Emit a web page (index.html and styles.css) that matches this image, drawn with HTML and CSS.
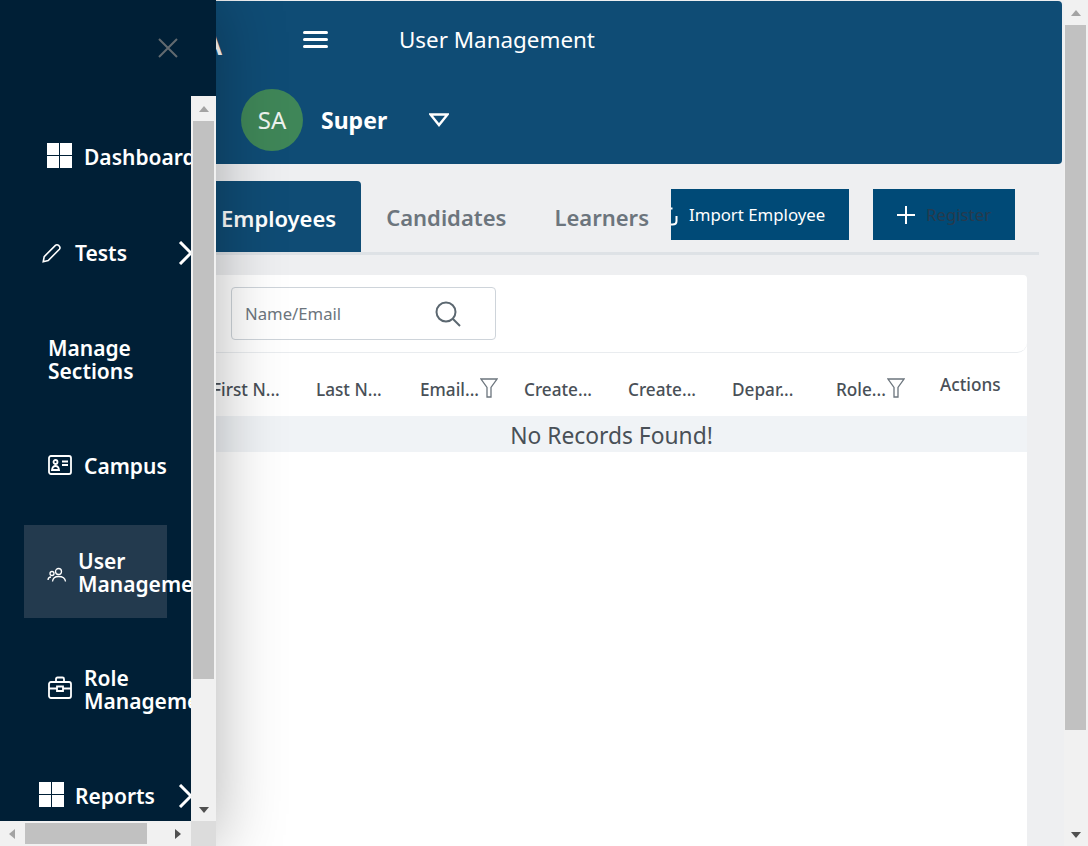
FILE: index.html
```html
<!DOCTYPE html>
<html lang="en">
  <head>
    <meta charset="UTF-8" />
    <meta name="viewport" content="width=device-width, initial-scale=1.0" />
    <title>User Management</title>
    <link rel="stylesheet" href="styles.css">
  </head>
  <body>
    <aside class="drawer">
      <div class="drawer-top">
        <svg class="close-icon" viewBox="0 0 20 20"><path d="M1 1 L19 19 M19 1 L1 19" /></svg>
      </div>
      <div class="drawer-middle">
        <nav class="nav">
          <a class="nav-item item-dashboard">
            <svg class="nav-icon grid-icon" viewBox="0 0 25 25"><path d="M0 0h12v12H0zM13 0h12v12H13zM0 13h12v12H0zM13 13h12v12H13z" /></svg>
            <span>Dashboard</span>
          </a>
          <a class="nav-item item-tests">
            <svg class="nav-icon pen-icon" viewBox="0 0 20 20"><path d="M1.2 18.8 L2.2 13.6 L13.4 2.4 Q15 0.9 16.9 2.7 Q18.8 4.6 17.4 6.2 L6.2 17.6 Z" /></svg>
            <span>Tests</span>
            <svg class="chevron" viewBox="0 0 24 24"><path d="M2 1 L13 12 L2 23" /></svg>
          </a>
          <a class="nav-item item-sections">
            <span>Manage<br />Sections</span>
          </a>
          <a class="nav-item item-campus">
            <svg class="nav-icon line-icon" viewBox="0 0 24 20"><rect x="1" y="1" width="22" height="18" rx="2" /><circle cx="7.5" cy="7" r="2" /><path d="M4 15 Q4.5 11 7.5 11 Q10.5 11 11 15 Z M14 6.5 H20 M14 10 H20" /></svg>
            <span>Campus</span>
          </a>
          <a class="nav-item item-users">
            <svg class="users-icon" viewBox="0 0 20 16"><circle cx="11.5" cy="4.5" r="3" /><circle cx="5" cy="6.5" r="2" /><path d="M5.5 14.5 Q6 9.5 11.5 9.5 Q18 9.5 18.5 14.5 M1 13 Q1.2 10 4 10" /></svg>
            <span>User<br />Management</span>
          </a>
          <a class="nav-item item-roles">
            <svg class="nav-icon line-icon" viewBox="0 0 24 24"><rect x="1" y="6" width="22" height="16" rx="2" /><path d="M8 6 V3 Q8 1.5 9.5 1.5 H14.5 Q16 1.5 16 3 V6 M1 12.5 H9 M15 12.5 H23 M9 10.5 H15 V15 H9 Z" /></svg>
            <span>Role<br />Management</span>
          </a>
          <a class="nav-item item-reports">
            <svg class="nav-icon grid-icon" viewBox="0 0 25 25"><path d="M0 0h12v12H0zM13 0h12v12H13zM0 13h12v12H0zM13 13h12v12H13z" /></svg>
            <span>Reports</span>
            <svg class="chevron" viewBox="0 0 24 24"><path d="M2 1 L13 12 L2 23" /></svg>
          </a>
        </nav>
        <div class="vbar drawer-vbar">
          <span class="arrow arrow-up"></span>
          <div class="vbar-track"><div class="thumb drawer-thumb"></div></div>
          <span class="arrow arrow-down"></span>
        </div>
      </div>
      <div class="drawer-bottom">
        <div class="hbar">
          <span class="arrow arrow-left"></span>
          <div class="hbar-track"><div class="thumb hbar-thumb"></div></div>
          <span class="arrow arrow-right"></span>
        </div>
        <div class="bar-corner"></div>
      </div>
    </aside>

    <div class="page">
      <main class="main">
        <header class="header">
          <div class="header-top">
            <div class="logo">A</div>
            <div class="hamburger"><i></i><i></i><i></i></div>
            <h1 class="page-title">User Management</h1>
          </div>
          <div class="header-user">
            <div class="avatar">SA</div>
            <span class="user-name">Super</span>
            <svg class="user-caret" viewBox="0 0 20 14"><path d="M1.5 1.5 H18.5 L10 12 Z" /></svg>
          </div>
        </header>

        <div class="content">
          <div class="tabs-row">
            <a class="tab tab-active">Employees</a>
            <a class="tab tab-mid">Candidates</a>
            <a class="tab tab-last">Learners</a>
            <div class="actions">
              <button class="btn btn-import">
                <svg class="import-icon" viewBox="0 0 7 20"><path d="M0 1.5 H1.5 M5.5 9 V14 Q5.5 17.5 1.5 17.5 H0" /></svg>
                Import Employee
              </button>
              <button class="btn btn-register">
                <svg class="plus-icon" viewBox="0 0 20 20"><path d="M10 1 V19 M1 10 H19" /></svg>
                <span>Register</span>
              </button>
            </div>
          </div>

          <section class="card">
            <div class="search-panel">
              <div class="search-box">
                <span class="search-text">Name/Email</span>
                <svg class="search-icon" viewBox="0 0 26 26"><circle cx="11" cy="11" r="9.5" /><path d="M18 18 L25 25" /></svg>
              </div>
            </div>
            <div class="table-head">
              <div class="th">First N...</div>
              <div class="th">Last N...</div>
              <div class="th">Email...<svg class="filter-icon" viewBox="0 0 18 20"><path d="M1 1 H17 L11 9.5 V19 H7 V9.5 Z" /></svg></div>
              <div class="th">Create...</div>
              <div class="th">Create...</div>
              <div class="th">Depar...</div>
              <div class="th">Role...<svg class="filter-icon" viewBox="0 0 18 20"><path d="M1 1 H17 L11 9.5 V19 H7 V9.5 Z" /></svg></div>
              <div class="th th-actions">Actions</div>
            </div>
            <div class="empty-row">No Records Found!</div>
          </section>
        </div>
      </main>

      <div class="vbar page-vbar">
        <span class="arrow arrow-up"></span>
        <div class="vbar-track"><div class="thumb page-thumb"></div></div>
        <span class="arrow arrow-down"></span>
      </div>
    </div>
  </body>
</html>
```

FILE: styles.css
```css
* {
  box-sizing: border-box;
}

body {
  margin: 0;
  height: 100vh;
  overflow: hidden;
  font-family: "Noto Sans", "Open Sans", sans-serif;
  background-color: #eeeff1;
  position: relative;
}

.page {
  display: flex;
  height: 100vh;
}
.main {
  flex: 1;
  min-width: 0;
  display: flex;
  flex-direction: column;
}

/* fake scrollbars */
.vbar {
  width: 24px;
  flex-shrink: 0;
  background-color: #f1f1f1;
  display: flex;
  flex-direction: column;
  align-items: center;
}
.vbar-track {
  flex: 1;
  width: 100%;
}
.thumb {
  background-color: #c1c1c1;
}
.page-thumb {
  margin: 0 2px 0 1px;
  height: 705px;
}
.arrow {
  width: 0;
  height: 0;
  flex-shrink: 0;
  border: 5px solid transparent;
}
.arrow-up {
  border-top: 0;
  border-bottom: 6px solid #a3a3a3;
  margin: 10px 0 9px;
}
.arrow-down {
  border-bottom: 0;
  border-top: 6px solid #505050;
  margin: 9px 0 8px;
}
.arrow-left {
  border-left: 0;
  border-right: 6px solid #a3a3a3;
  margin: 0 7px 0 9px;
}
.arrow-right {
  border-right: 0;
  border-left: 6px solid #505050;
  margin: 0 10px 0 7px;
}

/* drawer */
.drawer {
  position: absolute;
  top: 0;
  left: 0;
  z-index: 5;
  width: 216px;
  height: 100vh;
  background-color: #001f36;
  display: flex;
  flex-direction: column;
  box-shadow: 0 0 64px rgba(0, 0, 0, 0.3);
}
.drawer-top {
  height: 96px;
  padding: 38px 0 0 158px;
}
.close-icon {
  display: block;
  width: 20px;
  height: 20px;
  fill: none;
  stroke: #626a70;
  stroke-width: 2;
}
.drawer-middle {
  flex: 1;
  min-height: 0;
  display: flex;
}
.drawer-vbar {
  width: 25px;
}
.drawer-thumb {
  margin: 0 2px;
  height: 558px;
}
.drawer-bottom {
  height: 25px;
  display: flex;
}
.hbar {
  width: 191px;
  background-color: #f1f1f1;
  display: flex;
  align-items: center;
}
.hbar-track {
  flex: 1;
  height: 100%;
}
.hbar-thumb {
  height: 21px;
  width: 122px;
  margin: 2px 0 0 3px;
}
.bar-corner {
  flex: 1;
  background-color: #dcdcdc;
}

.nav {
  flex: 1;
  min-width: 0;
  overflow: hidden;
  padding-top: 13px;
}
.nav-item {
  display: flex;
  align-items: center;
  color: white;
  font-size: 21px;
  font-weight: 600;
  line-height: 23px;
  white-space: nowrap;
}
.item-dashboard {
  height: 96px;
  padding-left: 47px;
}
.item-tests {
  height: 96px;
  padding-left: 42px;
}
.item-sections {
  height: 118px;
  padding-left: 48px;
}
.item-campus {
  height: 94px;
  padding-left: 48px;
}
.item-users {
  width: 143px;
  height: 93px;
  margin: 12px 0 0 24px;
  padding: 2px 0 0 23px;
  background-color: #233a4e;
}
.item-roles {
  height: 93px;
  margin-top: 25px;
  padding-left: 48px;
}
.item-reports {
  height: 94px;
  margin-top: 13px;
  padding-left: 39px;
}

.nav-icon {
  flex-shrink: 0;
  width: 24px;
  margin-right: 12px;
}
.grid-icon {
  width: 25px;
  height: 25px;
  margin-top: -3px;
  margin-right: 12px;
}
.item-reports .grid-icon {
  margin-right: 11px;
}
.grid-icon path {
  fill: white;
}
.line-icon {
  height: 24px;
  margin-top: -3px;
  fill: none;
  stroke: white;
  stroke-width: 1.8;
}
.pen-icon {
  width: 20px;
  height: 20px;
  margin-right: 13px;
  fill: none;
  stroke: white;
  stroke-width: 1.6;
}
.users-icon {
  flex-shrink: 0;
  width: 20px;
  height: 16px;
  margin: 4px 11px 0 0;
  fill: none;
  stroke: white;
  stroke-width: 1.3;
}
.chevron {
  flex-shrink: 0;
  width: 24px;
  height: 24px;
  margin: 0 -11px 0 auto;
  fill: none;
  stroke: white;
  stroke-width: 3;
}

/* header */
.header {
  margin: 1px 2px 0 0;
  height: 163px;
  background-color: #0f4c75;
  border-radius: 0 4px 4px 0;
  color: white;
}
.header-top {
  height: 80px;
  display: flex;
  align-items: center;
}
.logo {
  width: 222px;
  margin-right: 81px;
  text-align: right;
  font-size: 28px;
  font-weight: 600;
  padding-top: 6px;
}
.hamburger {
  width: 25px;
  margin-right: 71px;
  display: flex;
  flex-direction: column;
  gap: 4px;
  margin-bottom: 3px;
}
.hamburger i {
  display: block;
  height: 3px;
  border-radius: 2px;
  background-color: white;
}
.page-title {
  margin: 0 0 4px;
  font-size: 22.4px;
  font-weight: 400;
}
.header-user {
  display: flex;
  align-items: center;
  padding: 8px 0 0 241px;
}
.avatar {
  width: 62px;
  height: 62px;
  margin-right: 18px;
  padding-bottom: 2px;
  border-radius: 50%;
  background-color: #3f8658;
  color: #eef3ef;
  font-size: 24px;
  display: flex;
  align-items: center;
  justify-content: center;
}
.user-name {
  width: 108px;
  font-size: 23px;
  font-weight: 700;
}
.user-caret {
  width: 20px;
  height: 14px;
  fill: none;
  stroke: white;
  stroke-width: 2.4;
}

/* tabs */
.content {
  flex: 1;
  min-height: 0;
  padding-left: 196px;
  display: flex;
  flex-direction: column;
}
.tabs-row {
  margin: 17px 25px 0 0;
  height: 74px;
  border-bottom: 3px solid #dee2e6;
  display: flex;
  padding-right: 24px;
}
.tab {
  padding: 0 25px;
  display: flex;
  align-items: center;
  font-size: 22px;
  font-weight: 600;
  color: #6c757d;
}
.tab-mid {
  padding-right: 23px;
}
.tab-last {
  padding-right: 22px;
}
.tab-active {
  padding-top: 2px;
  color: white;
  background-color: #0f4c75;
  border-radius: 0 4px 0 0;
}
.actions {
  margin-left: auto;
  display: flex;
  gap: 24px;
  padding-top: 8px;
}
.btn {
  height: 51px;
  border: 0;
  border-radius: 0;
  background-color: #004a77;
  font-family: inherit;
  font-size: 16.8px;
  display: flex;
  align-items: center;
  white-space: nowrap;
}
.btn-import {
  width: 178px;
  padding: 0;
  color: white;
}
.import-icon {
  width: 7px;
  height: 20px;
  margin: 5px 11px 0 0;
  fill: none;
  stroke: white;
  stroke-width: 2;
}
.btn-register {
  width: 142px;
  padding: 0 0 0 23px;
  color: #263a4d;
}
.plus-icon {
  width: 20px;
  height: 20px;
  margin-right: 10px;
  fill: none;
  stroke: white;
  stroke-width: 2;
}

/* card + table */
.card {
  flex: 1;
  margin: 20px 37px 0 0;
  background-color: white;
  border-radius: 0 4px 0 0;
  color: #495057;
}
.search-panel {
  height: 78px;
  padding: 12px 0 0 35px;
  border-bottom: 1px solid #e9ecef;
  border-radius: 0 0 10px 0;
}
.search-box {
  width: 265px;
  height: 53px;
  padding: 0 34px 0 13px;
  border: 1px solid #ced4da;
  border-radius: 4px;
  display: flex;
  align-items: center;
  justify-content: space-between;
}
.search-text {
  font-size: 16.7px;
  color: #6c757d;
}
.search-icon {
  width: 26px;
  height: 26px;
  fill: none;
  stroke: #5b6770;
  stroke-width: 2;
}
.table-head {
  height: 63px;
  padding: 9px 0 0 16px;
  display: grid;
  grid-template-columns: repeat(8, 104px);
  align-items: center;
}
.th {
  display: flex;
  align-items: center;
  font-size: 17.2px;
  font-weight: 500;
  white-space: nowrap;
}
.th-actions {
  padding-bottom: 10px;
}
.filter-icon {
  width: 18px;
  height: 20px;
  margin: -3px 0 0 1px;
  fill: none;
  stroke: #6c757d;
  stroke-width: 1.3;
}
.empty-row {
  height: 36px;
  padding-top: 2px;
  line-height: 36px;
  text-align: center;
  font-size: 22.8px;
  background-color: #f0f3f6;
}
```
